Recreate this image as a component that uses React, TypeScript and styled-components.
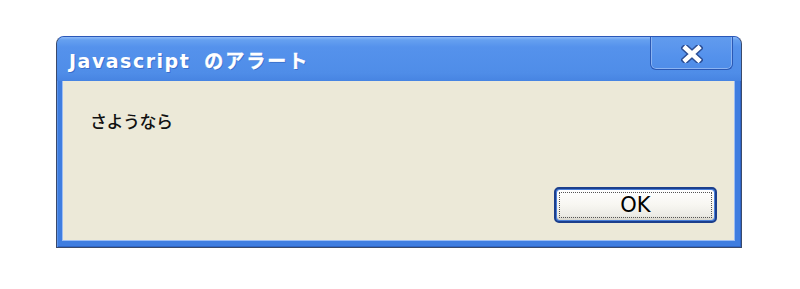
import React from "react";
import styled, { createGlobalStyle } from "styled-components";

const GlobalStyle = createGlobalStyle`
  html, body {
    margin: 0;
    padding: 0;
    background: #ffffff;
  }
`;

const Page = styled.div`
  width: 800px;
  height: 289px;
  box-sizing: border-box;
  padding: 36px 0 0 56px;
  display: flex;
  align-items: flex-start;
`;

const Window = styled.div`
  width: 686px;
  height: 212px;
  box-sizing: border-box;
  display: flex;
  flex-direction: column;
  background: #3f7de0;
  border: 1px solid #3b4a6b;
  border-top-color: #2a57b8;
  border-radius: 8px 8px 0 0;
  box-shadow: inset 0 1px 0 #8fb8f5, inset 1px 0 0 #5b93ea, inset -1px 0 0 #2f66c8,
    inset 0 -1px 0 #2f66c8;
  overflow: hidden;
`;

const TitleBar = styled.div`
  height: 44px;
  flex: none;
  display: flex;
  align-items: flex-start;
  justify-content: space-between;
  padding: 0 8px 0 12px;
  background: linear-gradient(
    to bottom,
    #8fbaf7 0px,
    #65a0f0 3px,
    #5592ec 10px,
    #4f8de8 36px,
    #4784e2 44px
  );
`;

const Title = styled.div`
  margin-top: 11px;
  color: #ffffff;
  font-family: "DejaVu Sans", "Noto Sans CJK JP", sans-serif;
  font-weight: 700;
  font-size: 19px;
  line-height: 24px;
  letter-spacing: 1.5px;
  white-space: nowrap;
  text-shadow: 1px 1px 0 #3a6fcc;
`;

const TitleKana = styled.span`
  font-family: "Noto Sans CJK JP", sans-serif;
  font-weight: 700;
  letter-spacing: 2px;
  margin-left: 14px;
  -webkit-text-stroke: 0.4px #ffffff;
`;

const CloseButton = styled.div`
  width: 83px;
  height: 34px;
  box-sizing: border-box;
  margin-top: -1px;
  display: flex;
  align-items: center;
  justify-content: center;
  padding-top: 2px;
  background: linear-gradient(to bottom, #629cee 0%, #5592ec 60%, #4f8de8 100%);
  border: 1px solid #2a58b4;
  border-top: none;
  border-radius: 0 0 6px 6px;
  box-shadow: inset 0 0 0 1px #8cb4f2;
`;

const Body = styled.div`
  flex: 1;
  margin: 0 6px 6px 5px;
  background: #ece9d8;
  border: 1px solid #9cbdf3;
  border-top: none;
  display: flex;
  flex-direction: column;
  justify-content: space-between;
  padding: 29px 17px 17px 27px;
  box-sizing: border-box;
`;

const Message = styled.div`
  font-family: "Noto Sans CJK JP", sans-serif;
  font-weight: 500;
  font-size: 17px;
  line-height: 22px;
  color: #111111;
  letter-spacing: -0.5px;
`;

const ButtonRow = styled.div`
  display: flex;
  justify-content: flex-end;
`;

const OkButton = styled.button`
  width: 163px;
  height: 36px;
  box-sizing: border-box;
  padding: 0;
  border: 2px solid #1c3f8c;
  border-radius: 5px;
  background: #4a7fd8;
  display: flex;
  align-items: stretch;
  justify-content: stretch;
  cursor: default;
`;

const OkFace = styled.span`
  flex: 1;
  margin: 1px;
  border-radius: 3px;
  background: linear-gradient(to bottom, #ffffff 0%, #f7f6f1 50%, #ecebe5 85%, #d9d7cc 100%);
  display: flex;
  align-items: center;
  justify-content: center;
  position: relative;
  font-family: "DejaVu Sans", "Liberation Sans", sans-serif;
  font-size: 21px;
  color: #000000;
  &::after {
    content: "";
    position: absolute;
    inset: 2px;
    border: 1px dotted #555555;
  }
`;

function CloseX() {
  return (
    <svg width="22" height="18" viewBox="0 0 22 18">
      <path
        d="M4.5 3 L17.5 15 M17.5 3 L4.5 15"
        stroke="#2c4f96"
        strokeWidth="7.5"
        strokeLinecap="square"
      />
      <path
        d="M4.5 3 L17.5 15 M17.5 3 L4.5 15"
        stroke="#ffffff"
        strokeWidth="4.5"
        strokeLinecap="square"
      />
    </svg>
  );
}

export default function App() {
  return (
    <>
      <GlobalStyle />
      <Page>
        <Window>
          <TitleBar>
            <Title>
              Javascript<TitleKana>のアラート</TitleKana>
            </Title>
            <CloseButton>
              <CloseX />
            </CloseButton>
          </TitleBar>
          <Body>
            <Message>さようなら</Message>
            <ButtonRow>
              <OkButton>
                <OkFace>OK</OkFace>
              </OkButton>
            </ButtonRow>
          </Body>
        </Window>
      </Page>
    </>
  );
}
